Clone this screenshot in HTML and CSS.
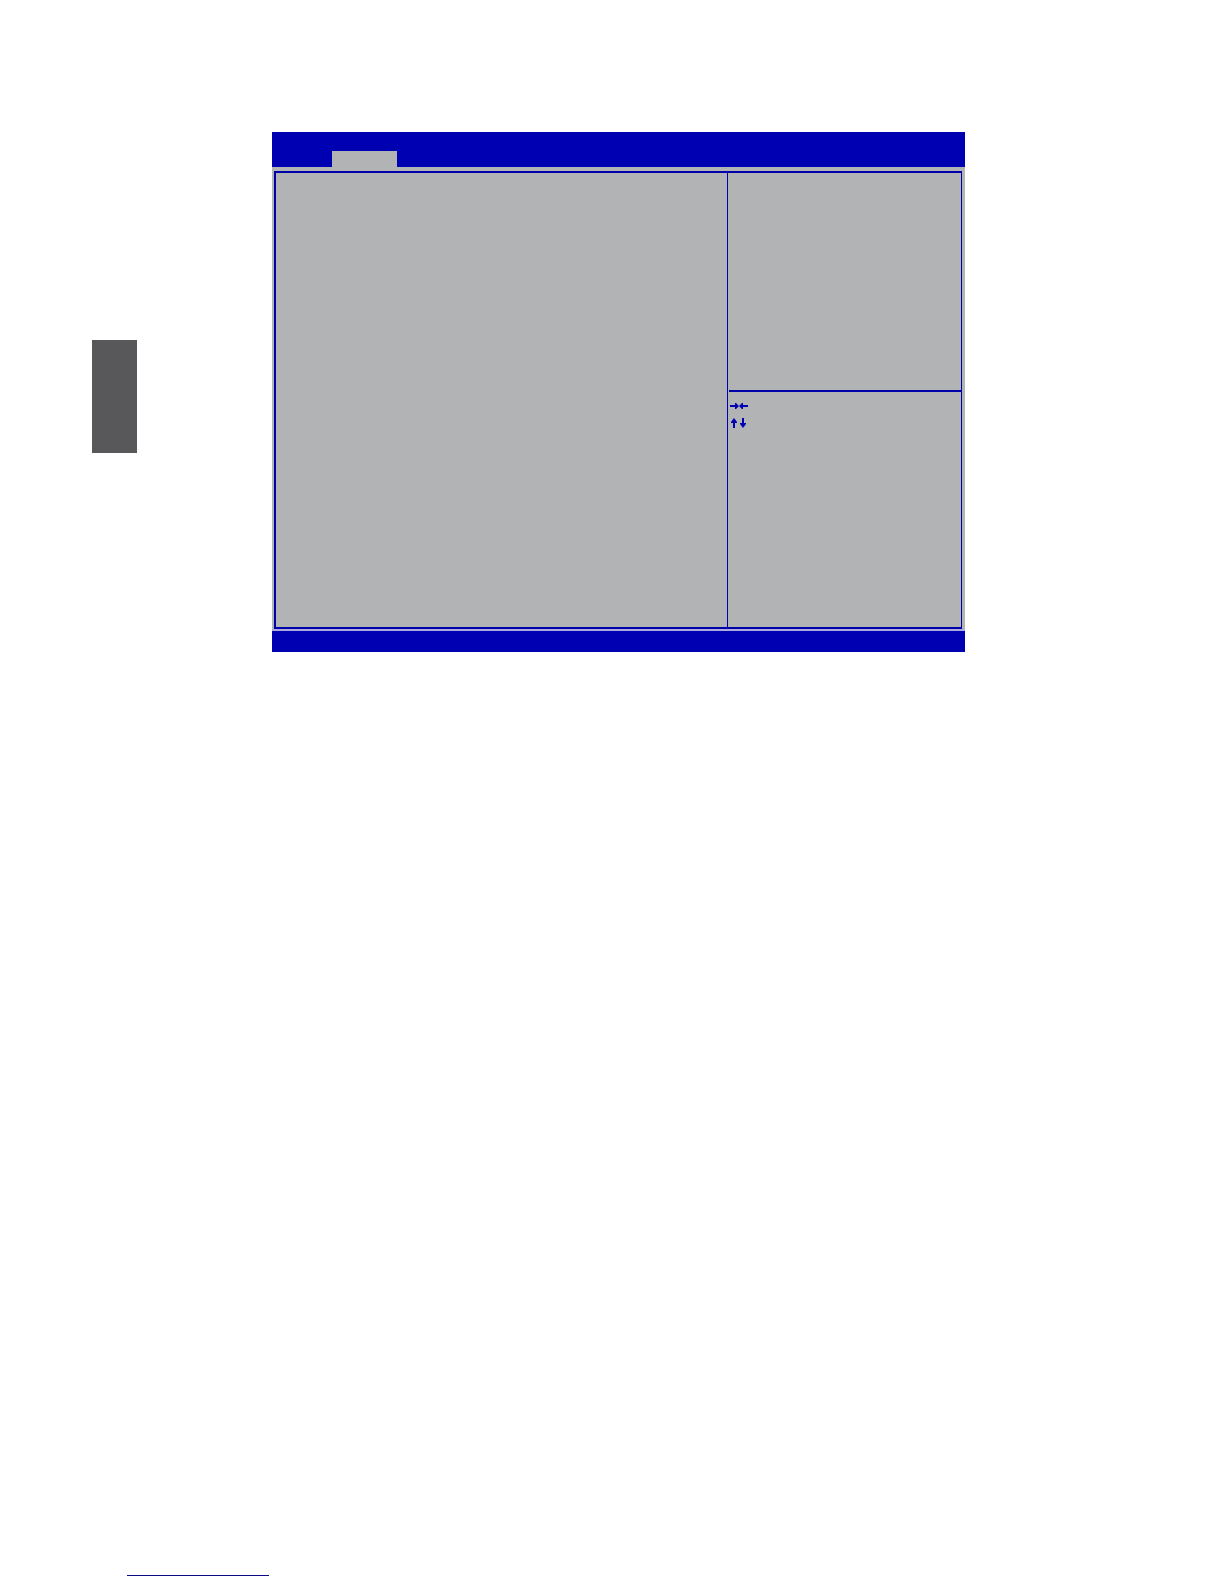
FILE: index.html
```html
<!DOCTYPE html>
<html lang="en">
<head>
    <meta charset="UTF-8">
    <meta name="viewport" content="width=device-width, initial-scale=1.0">
    <title>Setup Utility</title>
    <link rel="stylesheet" href="styles.css">
</head>
<body>

<div class="page">
    <main class="content">
        <div class="side-tab"></div>

        <div class="bios">
            <div class="bios-header">
                <div class="bios-tab"></div>
            </div>
            <div class="bios-body">
                <div class="frame">
                    <section class="settings"></section>
                    <aside class="info">
                        <div class="help"></div>
                        <div class="keys">
                            <svg class="key-icon" viewBox="0 0 18 8" aria-hidden="true">
                                <path d="M0 3h5V1h1l3 3-3 3H5V5H0zM18 3h-5V1h-1L9 4l3 3h1V5h5z"/>
                            </svg>
                            <svg class="key-icon key-icon-tall" viewBox="0 0 18 10" aria-hidden="true">
                                <path d="M3 10V5H1V4l3-4 3 4v1H5v5zM12 0v5h-2v1l3 4 3-4V5h-2V0z"/>
                            </svg>
                        </div>
                    </aside>
                </div>
            </div>
            <div class="bios-footer"></div>
        </div>
    </main>

    <footer class="page-footer">
        <a class="footer-link" href="#" aria-label="Contents"></a>
    </footer>
</div>

</body>
</html>
```

FILE: styles.css
```css
* {
    box-sizing: border-box;
}
body {
    margin: 0;
    background-color: #fff;
    font-family: "Liberation Sans", Arial, sans-serif;
}
.page {
    display: flex;
    flex-direction: column;
    justify-content: space-between;
    min-height: 100vh;
    padding: 132px 259px 8px 92px;
}
.content {
    display: flex;
    align-items: flex-start;
    gap: 135px;
}
.side-tab {
    flex: 0 0 45px;
    height: 113px;
    margin-top: 208px;
    background-color: #58585a;
}

/* Setup screen */
.bios {
    flex: 1;
    background-color: #b1b3b4;
}
.bios-header {
    display: flex;
    align-items: flex-end;
    height: 35px;
    padding-left: 60px;
    background-color: #0000b3;
}
.bios-tab {
    width: 65px;
    height: 16px;
    background-color: #b1b3b4;
}
.bios-body {
    padding: 4px 3px 0 2px;
    border-bottom: 2px solid #aaaae0;
}
.frame {
    display: flex;
    min-height: 458px;
    border: 2px solid #0000a8;
    border-right-width: 1px;
}
.settings {
    flex: 451;
}
.info {
    flex: 233;
    border-left: 1px solid #0000b3;
}
.help {
    height: 219px;
    margin-left: 1px;
    border-bottom: 2px solid #0000a8;
}
.keys {
    display: flex;
    flex-direction: column;
    gap: 8px;
    padding: 10px 2px;
}
.key-icon {
    width: 18px;
    height: 8px;
    fill: #0000b3;
}
.key-icon-tall {
    height: 10px;
}
.bios-footer {
    height: 21px;
    background-color: #0000b3;
}

/* Bottom of the page */
.page-footer {
    padding-left: 35px;
}
.footer-link {
    display: block;
    width: 142px;
    border-bottom: 1px solid #0c0c88;
}
```
